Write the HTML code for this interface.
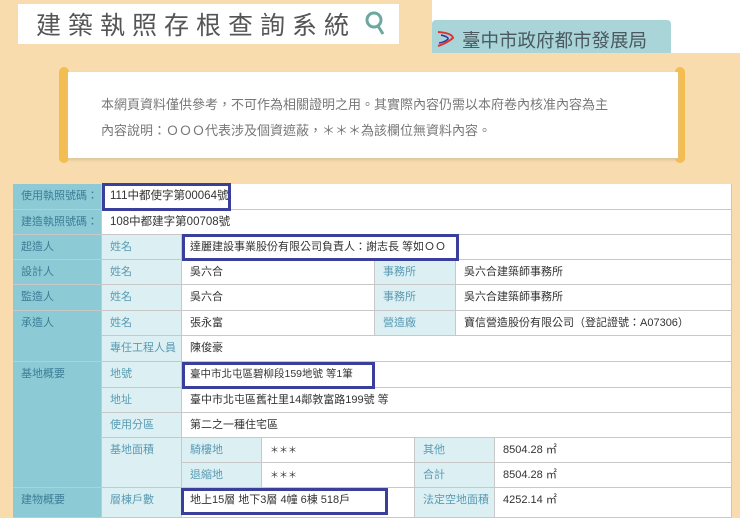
<!DOCTYPE html>
<html><head><meta charset="utf-8"><style>
*{margin:0;padding:0;box-sizing:border-box}
body{width:740px;height:518px;overflow:hidden;background:#f8dcae;font-family:"Liberation Sans","Noto Sans CJK TC",sans-serif;position:relative}
.a{position:absolute}
.c{position:absolute;font-size:11px;line-height:25px;padding-left:8px;border-right:1px solid #c8c8c8;border-bottom:1px solid #c8c8c8;white-space:nowrap;overflow:hidden}
.t{background:#8ccbd6;color:#3c7d96}
.l{background:#dcf0f4;color:#5a9ab2}
.w{background:#fff;color:#333}
.hb{position:absolute;border:3px solid #3a3f9c}
</style></head><body>
<div class="a" style="left:18px;top:4px;width:381px;height:40px;background:#fff"></div>
<div class="a" style="left:36px;top:7px;font-size:25px;letter-spacing:7px;color:#555;line-height:34px;font-family:'Noto Sans CJK TC',sans-serif">建築執照存根查詢系統</div>
<svg class="a" style="left:364px;top:10px" width="22" height="28"><circle cx="10" cy="10" r="7" fill="none" stroke="#6aa8a0" stroke-width="3"/><line x1="14" y1="16" x2="19" y2="24" stroke="#6aa8a0" stroke-width="3"/></svg>
<div class="a" style="left:432px;top:0;width:308px;height:53px;background:#fff"></div>
<div class="a" style="left:432px;top:20px;width:239px;height:33px;background:#a9d4d8;border-radius:4px 4px 0 0"></div>
<svg class="a" style="left:435px;top:27px" width="22" height="22"><path d="M3 5 Q17 6 18 11 Q12 16 3 19" fill="none" stroke="#d33" stroke-width="2"/><path d="M6 8 Q14 10 13 12 Q10 15 4 16" fill="none" stroke="#339" stroke-width="1.5"/></svg>
<div class="a" style="left:462px;top:28px;font-size:18.5px;color:#4a5a60;line-height:24px;font-family:'Noto Sans CJK TC',sans-serif">臺中市政府都市發展局</div>
<div class="a" style="left:59px;top:67px;width:10px;height:96px;background:#f3bd52;border-radius:5px"></div>
<div class="a" style="left:675px;top:67px;width:10px;height:96px;background:#f3bd52;border-radius:5px"></div>
<div class="a" style="left:68px;top:72px;width:610px;height:86px;background:#fff;box-shadow:0 2px 3px #d9c49a"></div>
<div class="a" style="left:101px;top:92px;font-size:13px;color:#777;line-height:26px">本網頁資料僅供參考，不可作為相關證明之用。其實際內容仍需以本府卷內核准內容為主<br>內容說明：ＯＯＯ代表涉及個資遮蔽，＊＊＊為該欄位無資料內容。</div>
<div class="a" style="left:13px;top:184px;width:719px;height:334px;background:#fff;border-left:1px solid #c8c8c8;border-top:1px solid #c8c8c8"></div>
<div class="c t" style="left:13px;top:184px;width:89px;height:26px">使用執照號碼：</div>
<div class="c w" style="left:102px;top:184px;width:630px;height:26px;font-size:11.5px">111中都使字第00064號</div>
<div class="c t" style="left:13px;top:210px;width:89px;height:25px">建造執照號碼：</div>
<div class="c w" style="left:102px;top:210px;width:630px;height:25px;font-size:11.5px">108中都建字第00708號</div>
<div class="c t" style="left:13px;top:235px;width:89px;height:25px">起造人</div>
<div class="c l" style="left:102px;top:235px;width:80px;height:25px">姓名</div>
<div class="c w" style="left:182px;top:235px;width:550px;height:25px">達麗建設事業股份有限公司負責人：謝志長 等如ＯＯ</div>
<div class="c t" style="left:13px;top:260px;width:89px;height:25px">設計人</div>
<div class="c l" style="left:102px;top:260px;width:80px;height:25px">姓名</div>
<div class="c w" style="left:182px;top:260px;width:193px;height:25px">吳六合</div>
<div class="c l" style="left:375px;top:260px;width:81px;height:25px">事務所</div>
<div class="c w" style="left:456px;top:260px;width:276px;height:25px">吳六合建築師事務所</div>
<div class="c t" style="left:13px;top:285px;width:89px;height:26px">監造人</div>
<div class="c l" style="left:102px;top:285px;width:80px;height:26px">姓名</div>
<div class="c w" style="left:182px;top:285px;width:193px;height:26px">吳六合</div>
<div class="c l" style="left:375px;top:285px;width:81px;height:26px">事務所</div>
<div class="c w" style="left:456px;top:285px;width:276px;height:26px">吳六合建築師事務所</div>
<div class="c t" style="left:13px;top:311px;width:89px;height:51px">承造人</div>
<div class="c l" style="left:102px;top:311px;width:80px;height:25px">姓名</div>
<div class="c w" style="left:182px;top:311px;width:193px;height:25px">張永富</div>
<div class="c l" style="left:375px;top:311px;width:81px;height:25px">營造廠</div>
<div class="c w" style="left:456px;top:311px;width:276px;height:25px">寶信營造股份有限公司（登記證號：A07306）</div>
<div class="c l" style="left:102px;top:336px;width:80px;height:26px">專任工程人員</div>
<div class="c w" style="left:182px;top:336px;width:550px;height:26px">陳俊豪</div>
<div class="c t" style="left:13px;top:362px;width:89px;height:126px">基地概要</div>
<div class="c l" style="left:102px;top:362px;width:80px;height:26px">地號</div>
<div class="c w" style="left:182px;top:362px;width:550px;height:26px;font-size:10.5px">臺中市北屯區碧柳段159地號 等1筆</div>
<div class="c l" style="left:102px;top:388px;width:80px;height:25px">地址</div>
<div class="c w" style="left:182px;top:388px;width:550px;height:25px">臺中市北屯區舊社里14鄰敦富路199號 等</div>
<div class="c l" style="left:102px;top:413px;width:80px;height:25px">使用分區</div>
<div class="c w" style="left:182px;top:413px;width:550px;height:25px">第二之一種住宅區</div>
<div class="c l" style="left:102px;top:438px;width:80px;height:50px">基地面積</div>
<div class="c l" style="left:182px;top:438px;width:80px;height:25px">騎樓地</div>
<div class="c w" style="left:262px;top:438px;width:153px;height:25px;font-size:9px">＊＊＊</div>
<div class="c l" style="left:415px;top:438px;width:80px;height:25px">其他</div>
<div class="c w" style="left:495px;top:438px;width:237px;height:25px">8504.28 ㎡</div>
<div class="c l" style="left:182px;top:463px;width:80px;height:25px">退縮地</div>
<div class="c w" style="left:262px;top:463px;width:153px;height:25px;font-size:9px">＊＊＊</div>
<div class="c l" style="left:415px;top:463px;width:80px;height:25px">合計</div>
<div class="c w" style="left:495px;top:463px;width:237px;height:25px">8504.28 ㎡</div>
<div class="c t" style="left:13px;top:488px;width:89px;height:30px">建物概要</div>
<div class="c l" style="left:102px;top:488px;width:80px;height:30px">層棟戶數</div>
<div class="c w" style="left:182px;top:488px;width:233px;height:30px">地上15層 地下3層 4幢 6棟 518戶</div>
<div class="c l" style="left:415px;top:488px;width:80px;height:30px">法定空地面積</div>
<div class="c w" style="left:495px;top:488px;width:237px;height:30px">4252.14 ㎡</div>
<div class="hb" style="left:102px;top:183px;width:129px;height:28px"></div>
<div class="hb" style="left:182px;top:234px;width:277px;height:27px"></div>
<div class="hb" style="left:182px;top:362px;width:193px;height:27px"></div>
<div class="hb" style="left:181px;top:488px;width:207px;height:27px"></div>
</body></html>
